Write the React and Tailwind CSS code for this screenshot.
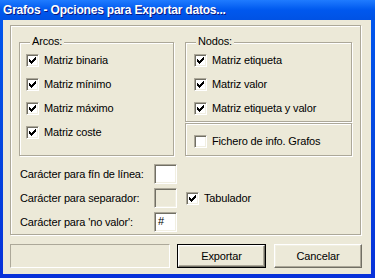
import React from 'react';

const sunken =
  'border border-t-[#aca899] border-l-[#aca899] border-b-white border-r-white shadow-[inset_1px_1px_0_#716f64,inset_-1px_-1px_0_#f1efe2]';
const etched = 'border border-[#aca899] shadow-[1px_1px_0_#fff,inset_1px_1px_0_#fff]';

const Check = ({ checked }) => (
  <span className={`w-[13px] h-[13px] shrink-0 bg-white ${sunken} flex`}>
    {checked && (
      <svg width="11" height="11" viewBox="0 0 11 11" shapeRendering="crispEdges">
        <path d="M2 4h1v1h1v1h1V5h1V4h1V3h1V2h1v3H8v1H7v1H6v1H5v1H4V8H3V7H2z" fill="#000" />
      </svg>
    )}
  </span>
);

const CheckRow = ({ checked, label }) => (
  <div className="flex items-center h-[13px] gap-[5px]">
    <Check checked={checked} />
    <span>{label}</span>
  </div>
);

const Group = ({ title, className, children }) => (
  <div className={`relative ${etched} ${className}`}>
    {title && (
      <span className="absolute left-[10px] top-[-8px] px-[2px] bg-[#ece9d8] leading-[13px]">{title}</span>
    )}
    {children}
  </div>
);

const Field = ({ label, value, disabled, extra }) => (
  <div className="flex items-center h-[20px]">
    <span className="w-[134px] ml-[1px]">{label}</span>
    <div className={`w-[23px] h-[20px] ${sunken} ${disabled ? 'bg-[#ece9d8]' : 'bg-white'} pl-[3px] leading-[17px]`}>
      {value}
    </div>
    {extra}
  </div>
);

const Button = ({ children, primary, className }) => (
  <div className={`${primary ? 'border border-black' : ''} ${className}`}>
    <div className="h-full flex items-center justify-center border border-t-white border-l-white border-b-[#716f64] border-r-[#716f64] shadow-[inset_-1px_-1px_0_#aca899,inset_1px_1px_0_#f1efe2]">
      {children}
    </div>
  </div>
);

export default function App() {
  return (
    <div
      className="w-[375px] h-[278px] flex flex-col bg-gradient-to-b from-[#0058ee] via-[#0648e0] to-[#0831d9] text-[11px] tracking-[-0.15px] text-black"
      style={{ fontFamily: '"Liberation Sans", Arial, sans-serif' }}
    >
      {/* title bar */}
      <div className="h-[20px] shrink-0 bg-gradient-to-b from-[#1f7bff] via-[#0058ee] to-[#0052e4] flex items-center pl-[3px]">
        <span className="text-white font-bold text-[12px] tracking-[-0.2px] [text-shadow:1px_1px_#0a1883]">
          Grafos - Opciones para Exportar datos...
        </span>
      </div>

      {/* body */}
      <div className="ml-[3px] w-[368px] h-[254px] bg-[#ece9d8] pt-[5px] pl-[7px]">
        <div className={`w-[351px] h-[210px] ${etched} pt-[16px] pl-[8px] flex flex-col`}>
          <div className="flex gap-[11px]">
            <Group title="Arcos:" className="w-[155px] h-[114px] pt-[11px] pl-[6px] flex flex-col gap-[11px]">
              <CheckRow checked label="Matriz binaria" />
              <CheckRow checked label="Matriz mínimo" />
              <CheckRow checked label="Matriz máximo" />
              <CheckRow checked label="Matriz coste" />
            </Group>
            <div className="flex flex-col gap-[1px]">
              <Group title="Nodos:" className="w-[167px] h-[80px] pt-[11px] pl-[8px] flex flex-col gap-[11px]">
                <CheckRow checked label="Matriz etiqueta" />
                <CheckRow checked label="Matriz valor" />
                <CheckRow checked label="Matriz etiqueta y valor" />
              </Group>
              <Group className="w-[167px] h-[33px] pt-[11px] pl-[8px]">
                <CheckRow label="Fichero de info. Grafos" />
              </Group>
            </div>
          </div>

          <div className="mt-[8px] flex flex-col gap-[4px]">
            <Field label="Carácter para fín de línea:" />
            <Field
              label="Carácter para separador:"
              disabled
              extra={
                <div className="ml-[9px]">
                  <CheckRow checked label="Tabulador" />
                </div>
              }
            />
            <Field label="Carácter para 'no valor':" value="#" />
          </div>
        </div>

        <div className="mt-[9px] flex h-[24px]">
          <div className="w-[160px] border border-t-[#aca899] border-l-[#aca899] border-b-white border-r-white" />
          <Button primary className="ml-[7px] w-[89px]">Exportar</Button>
          <Button className="ml-[8px] w-[88px]">Cancelar</Button>
        </div>
      </div>
    </div>
  );
}
